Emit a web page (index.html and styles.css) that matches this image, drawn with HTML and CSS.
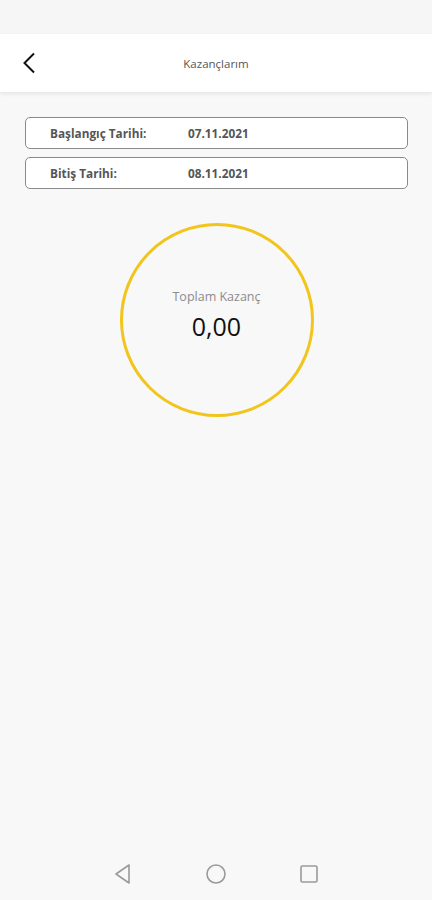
FILE: index.html
```html
<!DOCTYPE html>
<html lang="tr">

<head>
  <meta charset="UTF-8">
  <meta name="viewport" content="width=device-width, initial-scale=1.0">
  <title>Kazançlarım</title>
  <link rel="stylesheet" href="styles.css">
</head>

<body>
  <div class="status-bar"></div>
  <header class="top-bar">
    <button class="back-btn" type="button">
      <svg width="14" height="22" viewBox="0 0 14 22">
        <path d="M12 1.5 L2.5 11 L12 20.5" fill="none" stroke="#111" stroke-width="2" />
      </svg>
    </button>
    <h1 class="title">Kazançlarım</h1>
  </header>

  <main class="content">
    <div class="date-row">
      <span class="date-label">Başlangıç Tarihi:</span>
      <span class="date-value">07.11.2021</span>
    </div>
    <div class="date-row">
      <span class="date-label">Bitiş Tarihi:</span>
      <span class="date-value">08.11.2021</span>
    </div>

    <div class="total-circle">
      <span class="total-label">Toplam Kazanç</span>
      <span class="total-value">0,00</span>
    </div>
  </main>

  <nav class="nav-bar">
    <svg width="20" height="22" viewBox="0 0 20 22">
      <path d="M16 2 L16 20 L3 11 Z" fill="none" stroke="#9a9a9a" stroke-width="1.6" stroke-linejoin="round" />
    </svg>
    <svg width="22" height="22" viewBox="0 0 22 22">
      <circle cx="11" cy="11" r="9" fill="none" stroke="#9a9a9a" stroke-width="1.6" />
    </svg>
    <svg width="20" height="20" viewBox="0 0 20 20">
      <rect x="2" y="2" width="16" height="16" rx="1.5" fill="none" stroke="#9a9a9a" stroke-width="1.6" />
    </svg>
  </nav>
</body>

</html>
```

FILE: styles.css
```css
body {
  margin: 0;
  padding: 0;
  font-family: "Open Sans", "Noto Sans", Arial, sans-serif;
  background: #f8f8f8;
  height: 900px;
  display: flex;
  flex-direction: column;
  overflow: hidden;
}

.status-bar {
  height: 34px;
  background: #f6f6f6;
}

.top-bar {
  height: 58px;
  background: #fff;
  display: flex;
  align-items: center;
  justify-content: center;
  position: relative;
  box-shadow: 0 2px 4px rgba(0, 0, 0, 0.08);
}

.back-btn {
  position: absolute;
  left: 22px;
  top: 18px;
  background: none;
  border: none;
  padding: 0;
  width: 14px;
  height: 22px;
  cursor: pointer;
}

.title {
  margin: 0;
  font-size: 11.5px;
  font-weight: 400;
  color: #555;
}

.content {
  flex: 1;
  padding: 25px 24px 0 25px;
  display: flex;
  flex-direction: column;
  gap: 8px;
}

.date-row {
  height: 30px;
  border: 1px solid #8a8a8a;
  border-radius: 5px;
  background: #fff;
  display: flex;
  align-items: center;
  padding-left: 24px;
  font-size: 11.8px;
  font-weight: 700;
  color: #555;
}

.date-label {
  width: 138px;
}

.total-circle {
  margin: 26px auto 0;
  width: 188px;
  height: 188px;
  border: 3px solid #f2c51c;
  border-radius: 50%;
  display: flex;
  flex-direction: column;
  align-items: center;
  justify-content: center;
}

.total-label {
  font-size: 12.5px;
  color: #8c8c8c;
  margin-top: -10px;
}

.total-value {
  font-size: 25px;
  color: #111;
  margin-top: 4px;
}

.nav-bar {
  height: 52px;
  display: flex;
  justify-content: center;
  align-items: center;
  gap: 72px;
  padding-top: 6px;
}
```
